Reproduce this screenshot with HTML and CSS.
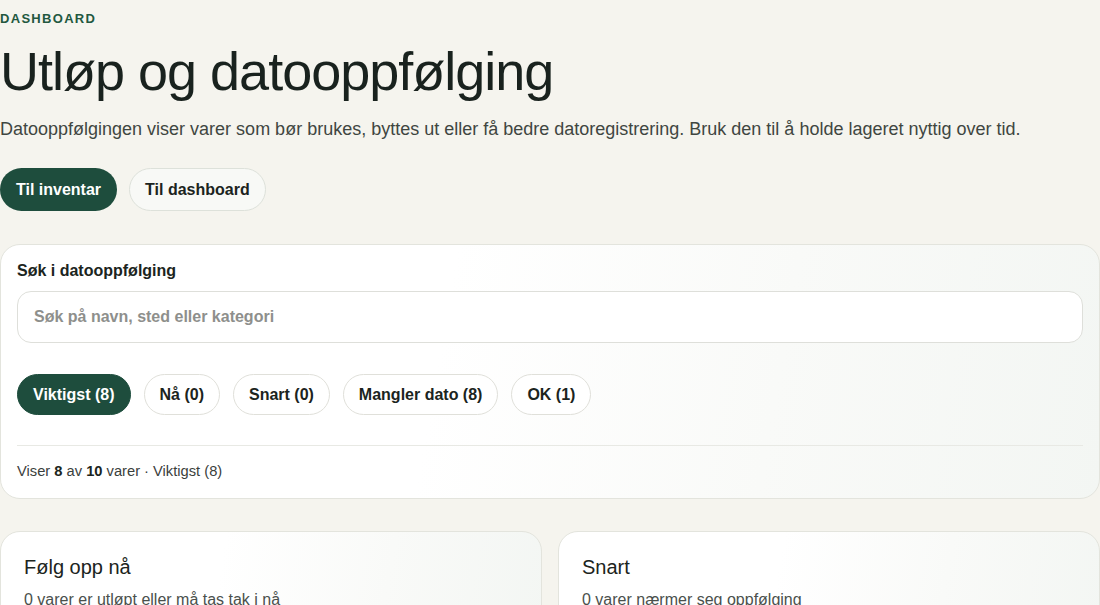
FILE: index.html
```html
<!DOCTYPE html>
<html lang="no">
<head>
<meta charset="utf-8">
<title>Utløp og datooppfølging</title>
<link rel="stylesheet" href="styles.css">
</head>
<body>
<main class="page">
  <header class="hero">
    <p class="eyebrow">DASHBOARD</p>
    <h1 class="title">Utløp og datooppfølging</h1>
    <p class="lead">Datooppfølgingen viser varer som bør brukes, byttes ut eller få bedre datoregistrering. Bruk den til å holde lageret nyttig over tid.</p>
    <div class="actions">
      <a class="btn btn-primary" href="#">Til inventar</a>
      <a class="btn btn-secondary" href="#">Til dashboard</a>
    </div>
  </header>

  <section class="card search-card">
    <label class="search-label" for="q">Søk i datooppfølging</label>
    <input class="search-input" id="q" type="text" placeholder="Søk på navn, sted eller kategori">
    <div class="chips">
      <button class="chip chip-active">Viktigst (8)</button>
      <button class="chip">Nå (0)</button>
      <button class="chip">Snart (0)</button>
      <button class="chip">Mangler dato (8)</button>
      <button class="chip">OK (1)</button>
    </div>
    <p class="result-info">Viser <strong>8</strong> av <strong>10</strong> varer · Viktigst (8)</p>
  </section>

  <section class="columns">
    <article class="card panel">
      <h2 class="panel-title">Følg opp nå</h2>
      <p class="panel-sub">0 varer er utløpt eller må tas tak i nå</p>
    </article>
    <article class="card panel">
      <h2 class="panel-title">Snart</h2>
      <p class="panel-sub">0 varer nærmer seg oppfølging</p>
    </article>
  </section>
</main>
</body>
</html>
```
FILE: styles.css
```css
* { box-sizing: border-box; }
html, body {
  margin: 0;
  padding: 0;
  background: #f5f4ee;
  font-family: "Liberation Sans", Arial, Helvetica, sans-serif;
  color: #1b2420;
}
.page {
  width: 1100px;
  padding: 0;
}
.eyebrow {
  margin: 0;
  padding-top: 12px;
  font-size: 13px;
  line-height: 14px;
  font-weight: 700;
  letter-spacing: 0.1em;
  color: #22583f;
}
.title {
  margin: 16px 0 0;
  font-size: 54px;
  line-height: 1.1;
  font-weight: 400;
  letter-spacing: -1px;
  color: #19221e;
}
.lead {
  margin: 15px 0 0;
  font-size: 18px;
  line-height: 26px;
  color: #3f4641;
}
.actions {
  display: flex;
  gap: 12px;
  margin-top: 26px;
}
.btn {
  display: inline-flex;
  align-items: center;
  height: 43px;
  padding: 0 15px;
  border-radius: 22px;
  font-size: 16px;
  font-weight: 700;
  text-decoration: none;
  border: 1px solid transparent;
}
.btn-primary {
  background: #1e4d3d;
  color: #ffffff;
}
.btn-secondary {
  background: #f8f9f6;
  border-color: #dde1da;
  color: #1b2420;
}
.card {
  background: linear-gradient(100deg, #ffffff 40%, #f9faf8 70%, #f3f6f3 100%);
  border: 1px solid #e3e4dd;
}
.search-card {
  margin-top: 33px;
  border-radius: 20px;
  padding: 16px 16px 17px;
  display: flex;
  flex-direction: column;
}
.search-label {
  font-size: 16px;
  line-height: 20px;
  font-weight: 700;
  color: #1b2420;
}
.search-input {
  margin-top: 10px;
  height: 52px;
  width: 100%;
  border: 1px solid #dedfda;
  border-radius: 14px;
  background: #ffffff;
  padding: 0 16px;
  font-family: inherit;
  font-size: 16px;
  font-weight: 700;
  color: #1b2420;
  outline: none;
}
.search-input::placeholder {
  color: #8e8f8c;
  opacity: 1;
}
.chips {
  display: flex;
  gap: 13px;
  margin-top: 31px;
  padding-bottom: 30px;
  border-bottom: 1px solid #e8e9e4;
}
.chip {
  height: 41px;
  padding: 0 15px;
  border-radius: 21px;
  border: 1px solid #e0e0da;
  background: #ffffff;
  font-family: inherit;
  font-size: 16px;
  font-weight: 700;
  color: #1b2420;
}
.chip-active {
  background: #1e4d3d;
  border-color: #1e4d3d;
  color: #ffffff;
}
.result-info {
  margin: 15px 0 0;
  font-size: 14.7px;
  line-height: 20px;
  color: #3a403c;
}
.result-info strong {
  color: #1b2420;
}
.columns {
  display: grid;
  grid-template-columns: 1fr 1fr;
  gap: 16px;
  margin-top: 32px;
}
.panel {
  border-radius: 20px;
  padding: 23px 23px 24px;
  min-height: 140px;
}
.panel-title {
  margin: 0;
  font-size: 20px;
  line-height: 24px;
  font-weight: 400;
  color: #1b2420;
}
.panel-sub {
  margin: 10px 0 0;
  font-size: 16px;
  line-height: 22px;
  color: #4a504c;
}
```
